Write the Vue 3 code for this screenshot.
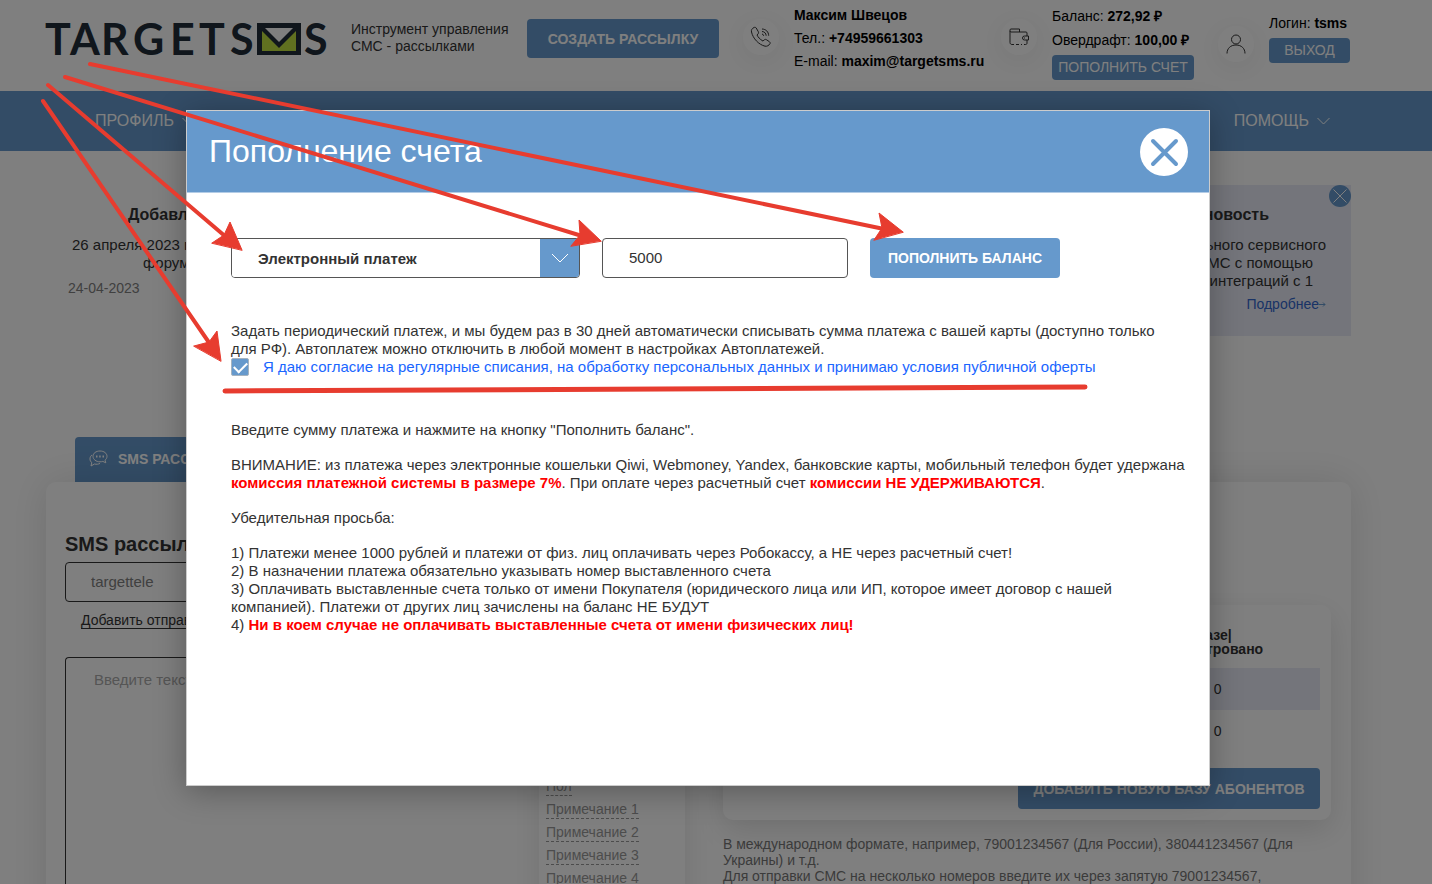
<script setup>
import { ref } from 'vue'

const method = ref('Электронный платеж')
const methods = ['Электронный платеж', 'Расчетный счет']
const amount = ref('5000')
const agree = ref(true)
const sender = ref('targettele')
const message = ref('')

const fields = ['Пол', 'Примечание 1', 'Примечание 2', 'Примечание 3', 'Примечание 4']
const bases = ref([
  { id: 1, count: '0 | 0' },
  { id: 2, count: '0 | 0' },
])
</script>

<template>
  <div class="page">
    <header class="header">
      <a href="#" class="logo" aria-label="TARGETSMS">
        <svg width="281" height="60" viewBox="0 0 281 60">
          <g class="logoText">
            <text x="-1" y="46">T</text>
            <text x="24" y="46">A</text>
            <text x="55" y="46">R</text>
            <text x="87" y="46">G</text>
            <text x="124" y="46">E</text>
            <text x="153" y="46">T</text>
            <text x="184" y="46">S</text>
            <text x="258" y="46">S</text>
          </g>
          <rect x="211" y="14" width="44" height="32" fill="#212c38" />
          <path d="M219 19h28l-14 14z" fill="#fff" />
          <path d="M216 22l17 17 17-17v20h-34z" fill="#c0e040" />
        </svg>
      </a>
      <p class="tagline">Инструмент управления<br>СМС - рассылками</p>
      <button class="createButton">СОЗДАТЬ РАССЫЛКУ</button>
      <div class="infoBlock">
        <span class="circle">
          <svg width="22" height="22" viewBox="0 0 22 22" class="lineIcon">
            <path d="M4 1.500C2 2.500 1 4 1.500 6c1.500 6.500 7 12.500 13.500 14.200 2 .4 4-.8 5-2.500.4-.8 0-1.500-.6-2l-3-2c-.8-.5-1.500-.4-2.200.2l-1.200 1.200C9.500 13 8 11 7 9l1.200-1.300c.5-.6.5-1.300.1-2L6.200 2C5.600 1.200 4.800 1.100 4 1.500z" />
            <path d="M12 8c1 .2 1.500.8 1.700 1.800M12 5.500c2.500.2 4 1.700 4.200 4.200M12 3c4 .2 6.500 2.700 6.700 6.700" />
          </svg>
        </span>
        <div class="contacts">
          <p><b>Максим Швецов</b></p>
          <p>Тел.: <b>+74959661303</b></p>
          <p>E-mail: <b>maxim@targetsms.ru</b></p>
        </div>
      </div>
      <div class="infoBlock">
        <span class="circle">
          <svg width="20" height="18" viewBox="0 0 20 18" class="lineIcon">
            <path d="M1 3v11.500c0 1.200.8 2 2 2h2M7 16.500h3M12 16.500h1M15 16.500h1.500c1 0 1.500-.5 1.500-1.500v-3M18 8V5c0-.7-.4-1-1-1H2C1.400 4 1 3.600 1 3V2c0-.6.4-1 1-1h8.500v3" />
            <path d="M19.500 8h-4a2 2 0 0 0 0 4h4zM15.500 9.500v1" />
          </svg>
        </span>
        <div class="balance">
          <p>Баланс: <b>272,92 ₽</b></p>
          <p>Овердрафт: <b>100,00 ₽</b></p>
          <button class="smallButton">ПОПОЛНИТЬ СЧЕТ</button>
        </div>
      </div>
      <div class="infoBlock login">
        <span class="circle">
          <svg width="20" height="20" viewBox="0 0 20 20" class="lineIcon">
            <circle cx="10" cy="5.500" r="4.500" />
            <path d="M1 19.500c0-5 3.500-8.500 9-8.500s9 3.500 9 8.500" />
          </svg>
        </span>
        <div class="balance">
          <p>Логин: <b>tsms</b></p>
          <button class="smallButton">ВЫХОД</button>
        </div>
      </div>
    </header>

    <nav class="nav">
      <a href="#">ПРОФИЛЬ
        <svg width="13" height="8" viewBox="0 0 13 8"><path d="M.5 1l6 6 6-6" /></svg>
      </a>
      <a href="#">ПОМОЩЬ
        <svg width="13" height="8" viewBox="0 0 13 8"><path d="M.5 1l6 6 6-6" /></svg>
      </a>
    </nav>

    <section class="news">
      <article class="newsLeft">
        <h3>Добавлена новость</h3>
        <p class="first">26 апреля 2023 г. состоится</p>
        <p class="second">форум</p>
        <time>24-04-2023</time>
      </article>
      <article class="newsRight">
        <button class="newsClose" aria-label="Закрыть">
          <svg width="22" height="22" viewBox="0 0 22 22"><path d="M4.500 4.500l13 13M17.500 4.500l-13 13" /></svg>
        </button>
        <h3>Важная новость</h3>
        <p class="wide">Запуск дополнительного сервисного</p>
        <p>СМС с помощью</p>
        <p>API/интеграций с 1</p>
        <a href="#">Подробнее<svg width="7" height="7" viewBox="0 0 7 7"><path d="M0 3.500h6M4 1.500l2 2-2 2" /></svg></a>
      </article>
    </section>

    <main class="sending">
      <button class="tab">
        <svg width="19" height="17" viewBox="0 0 19 17">
          <path d="M11 1c4 0 7 2.300 7 5.300 0 1.600-.7 2.900-2 3.900l.8 2.600-3-1.400c-.9.300-1.800.400-2.800.400-4 0-7-2.400-7-5.500S7 1 11 1z" />
          <path d="M3 5C1.500 6 1 7.400 1 9c0 1.500.6 2.700 1.800 3.600L2 16l3.500-2c2 .5 4 .2 5.500-.6" />
          <path d="M7 6.500h1.500M10.200 6.500h1.500M13.500 6.500H15" class="dots" />
        </svg>
        SMS РАССЫЛКА
      </button>
      <div class="panel">
        <div class="composer">
          <h2>SMS рассылка</h2>
          <input v-model="sender" class="sender" aria-label="Отправитель">
          <a href="#" class="addSender">Добавить отправителя</a>
          <div class="messageBox">
            <textarea v-model="message" placeholder="Введите текст сообщения" aria-label="Текст сообщения"></textarea>
            <div class="fields">
              <a v-for="field in fields" :key="field" href="#">{{ field }}</a>
            </div>
          </div>
        </div>
        <div class="right">
          <div class="basesCard">
            <table class="bases">
              <thead>
                <tr>
                  <th></th>
                  <th>в базе|<br>зарегистровано</th>
                </tr>
              </thead>
              <tbody>
                <tr v-for="base in bases" :key="base.id">
                  <td></td>
                  <td>{{ base.count }}</td>
                </tr>
              </tbody>
            </table>
            <button class="addBase">ДОБАВИТЬ НОВУЮ БАЗУ АБОНЕНТОВ</button>
          </div>
          <p class="hint">
            В международном формате, например, 79001234567 (Для России), 380441234567 (Для<br>Украины) и т.д.<br>
            Для отправки СМС на несколько номеров введите их через запятую 79001234567,
          </p>
        </div>
      </div>
    </main>

    <div class="overlay">
      <div class="modal" role="dialog" aria-labelledby="modalTitle">
        <div class="modalHeader">
          <h1 id="modalTitle">Пополнение счета</h1>
          <button class="closeButton" aria-label="Закрыть">
            <svg width="48" height="48" viewBox="0 0 48 48"><path d="M13 13l23 23M36 13l-23 23" /></svg>
          </button>
        </div>
        <div class="modalBody">
          <form class="payForm" @submit.prevent>
            <div class="selectBox">
              <select v-model="method" aria-label="Способ оплаты">
                <option v-for="m in methods" :key="m">{{ m }}</option>
              </select>
              <span class="selectArrow">
                <svg width="18" height="10" viewBox="0 0 18 10"><path d="M1 1l8 8 8-8" /></svg>
              </span>
            </div>
            <input v-model="amount" class="amount" aria-label="Сумма платежа">
            <button class="payButton">ПОПОЛНИТЬ БАЛАНС</button>
          </form>
          <p>Задать периодический платеж, и мы будем раз в 30 дней автоматически списывать сумма платежа с вашей карты (доступно только<br>для РФ). Автоплатеж можно отключить в любой момент в настройках Автоплатежей.</p>
          <div class="agree">
            <input id="agree" v-model="agree" type="checkbox">
            <label for="agree">Я даю согласие на регулярные списания, на обработку персональных данных и принимаю условия публичной оферты</label>
          </div>
          <div class="rules">
            <p>Введите сумму платежа и нажмите на кнопку "Пополнить баланс".</p>
            <p>ВНИМАНИЕ: из платежа через электронные кошельки Qiwi, Webmoney, Yandex, банковские карты, мобильный телефон будет удержана<br><b>комиссия платежной системы в размере 7%</b>. При оплате через расчетный счет <b>комиссии НЕ УДЕРЖИВАЮТСЯ</b>.</p>
            <p>Убедительная просьба:</p>
            <p>
              1) Платежи менее 1000 рублей и платежи от физ. лиц оплачивать через Робокассу, а НЕ через расчетный счет!<br>
              2) В назначении платежа обязательно указывать номер выставленного счета<br>
              3) Оплачивать выставленные счета только от имени Покупателя (юридического лица или ИП, которое имеет договор с нашей<br>компанией). Платежи от других лиц зачислены на баланс НЕ БУДУТ<br>
              4) <b>Ни в коем случае не оплачивать выставленные счета от имени физических лиц!</b>
            </p>
          </div>
        </div>
      </div>
    </div>

    <!-- step pointers over the dialog -->
    <svg class="pointers">
      <path d="M90 64L884 229M65 77L582 236M48 85L226 237M43 101L210 344" />
      <path d="M225 391L1085 387" class="underline" />
      <polygon points="903,232 879,213 882,228 874,240" />
      <polygon points="601,241 579,220 580,235 571,246" />
      <polygon points="242,250 230,222 224,235 212,243" />
      <polygon points="221,361 217,331 209,342 194,346" />
    </svg>
  </div>
</template>

<style>
  body {
    margin: 0;
    background-color: #fff;
  }
</style>

<style scoped>
  .page {
    position: relative;
    height: 100vh;
    overflow: hidden;
    font-family: "Liberation Sans", Arial, sans-serif;
    font-size: 15px;
    line-height: 18px;
    color: #333;
  }
  .page * {
    box-sizing: border-box;
  }
  p, h1, h2, h3 {
    margin: 0;
  }
  a {
    color: inherit;
    text-decoration: none;
  }
  button, input, select, textarea {
    font-family: inherit;
    font-size: 15px;
    color: #333;
    margin: 0;
  }
  button {
    border: none;
    border-radius: 4px;
    background-color: #6699cc;
    color: #fff;
    padding: 0;
    cursor: pointer;
    white-space: nowrap;
  }
  svg {
    display: block;
    fill: none;
  }

  .header {
    display: flex;
    align-items: flex-start;
    gap: 24px;
    height: 91px;
    padding: 0 82px 0 46px;
    white-space: nowrap;
  }
  .logo {
    margin-top: 9px;
  }
  .logo svg {
    overflow: visible;
  }
  .logoText {
    font-family: Lato, sans-serif;
    font-size: 43px;
    font-weight: bold;
    fill: #212c38;
  }
  .tagline {
    width: 152px;
    padding-top: 21px;
    font-size: 14px;
    line-height: 17px;
  }
  .createButton {
    width: 192px;
    height: 39px;
    margin-top: 19px;
    font-size: 14px;
    font-weight: bold;
  }
  .infoBlock {
    display: flex;
    gap: 15px;
    font-size: 14px;
    color: #000;
  }
  .circle {
    display: flex;
    align-items: center;
    justify-content: center;
    width: 36px;
    height: 36px;
    margin-top: 19px;
    border-radius: 50%;
    box-shadow: 0 5px 30px rgba(0, 0, 0, 0.08);
  }
  .lineIcon {
    stroke: #333;
  }
  .contacts {
    width: 183px;
    padding-top: 4px;
    line-height: 23px;
  }
  .balance {
    padding-top: 4px;
    line-height: 24px;
  }
  .smallButton {
    display: block;
    width: 142px;
    height: 25px;
    margin-top: 3px;
    padding-bottom: 2px;
    font-size: 14px;
  }
  .login .circle {
    margin-top: 26px;
  }
  .login .balance {
    padding-top: 11px;
  }
  .login .smallButton {
    width: 81px;
  }

  .nav {
    display: flex;
    align-items: center;
    justify-content: space-between;
    height: 60px;
    padding: 0 102px 0 95px;
    background-color: #6699cc;
    color: #fff;
    font-size: 16px;
  }
  .nav a {
    display: flex;
    align-items: center;
    gap: 8px;
  }
  .nav svg, .newsClose svg, .tab svg, .selectArrow svg {
    stroke: #fff;
  }

  .news {
    display: flex;
    justify-content: space-between;
    padding: 34px 81px 101px 68px;
    white-space: nowrap;
  }
  .news h3 {
    font-size: 16px;
    line-height: 20px;
    margin-bottom: 11px;
  }
  .newsLeft {
    padding-top: 20px;
  }
  .newsLeft h3 {
    padding-left: 60px;
  }
  .newsLeft .first {
    padding-left: 4px;
  }
  .newsLeft .second {
    padding-left: 75px;
  }
  .newsLeft time {
    display: block;
    margin-top: 7px;
    font-size: 14px;
    color: #808080;
  }
  .newsRight {
    position: relative;
    width: 320px;
    height: 151px;
    padding: 20px 25px 0 0;
    background-color: #e8ebf7;
    text-align: right;
  }
  .newsRight h3 {
    padding-right: 57px;
  }
  .newsRight p {
    padding-right: 13px;
  }
  .newsRight p.wide {
    padding-right: 0;
  }
  .newsRight a {
    display: flex;
    align-items: center;
    justify-content: flex-end;
    margin-top: 5px;
    font-size: 14px;
    color: #3366cc;
  }
  .newsRight a svg {
    stroke: #6699cc;
  }
  .newsClose {
    position: absolute;
    top: 0;
    right: 0;
    border-radius: 50%;
  }

  .tab {
    display: flex;
    align-items: center;
    gap: 10px;
    height: 45px;
    margin-left: 75px;
    padding: 0 14px 2px;
    border-radius: 4px 4px 0 0;
    font-size: 14px;
    font-weight: bold;
  }
  .tab .dots {
    stroke-width: 2;
  }
  .panel {
    display: grid;
    grid-template-columns: 620fr 608fr;
    gap: 38px;
    margin: 0 81px 0 46px;
    padding: 50px 20px 40px 19px;
    border-radius: 10px;
    box-shadow: 0 0 40px rgba(0, 0, 0, 0.12);
  }
  .composer h2 {
    font-size: 20px;
    line-height: 24px;
  }
  .sender {
    display: block;
    width: 100%;
    height: 40px;
    margin-top: 6px;
    padding: 0 25px 2px;
    border: 1px solid #333;
    border-radius: 4px;
    color: #808080;
  }
  .addSender {
    display: inline-block;
    margin: 10px 0 0 16px;
    line-height: 16px;
    font-size: 14px;
    border-bottom: 1px solid #333;
  }
  .messageBox {
    display: flex;
    height: 300px;
    margin-top: 28px;
    border: 1px solid #333;
    border-right: none;
    border-radius: 4px 0 0 4px;
  }
  .messageBox textarea {
    flex: 1;
    padding: 13px 28px;
    border: none;
    background-color: transparent;
    resize: none;
  }
  .messageBox textarea::placeholder {
    color: #aaa;
  }
  .fields {
    display: flex;
    flex-direction: column;
    align-items: flex-start;
    gap: 5px;
    width: 146px;
    padding: 120px 7px 0;
    box-shadow: 0 0 30px rgba(0, 0, 0, 0.1);
    font-size: 14px;
    color: #999;
  }
  .fields a {
    line-height: 17px;
    border-bottom: 1px dashed #999;
  }
  .basesCard {
    display: flex;
    flex-direction: column;
    align-items: flex-end;
    height: 215px;
    margin-top: 73px;
    padding: 0 11px;
    border-radius: 10px;
    box-shadow: 0 10px 30px rgba(0, 0, 0, 0.12);
  }
  .bases {
    width: 100%;
    border-collapse: collapse;
    table-layout: fixed;
    font-size: 14px;
    text-align: center;
  }
  .bases th {
    height: 63px;
    padding: 10px 0 0;
    line-height: 14px;
  }
  .bases th:last-child {
    width: 224px;
  }
  .bases td {
    height: 42px;
    padding: 0;
  }
  .bases tbody tr:first-child {
    background-color: #e8ebf7;
  }
  .addBase {
    width: 302px;
    height: 41px;
    margin-top: 16px;
    font-size: 14px;
    font-weight: bold;
  }
  .hint {
    margin-top: 16px;
    font-size: 14px;
    line-height: 16px;
    color: #777;
    white-space: nowrap;
  }

  .overlay {
    position: absolute;
    inset: 0;
    padding: 110px 222px 0 186px;
    background-color: rgba(0, 0, 0, 0.5);
  }
  .modal {
    min-height: 676px;
    border: 1px solid rgba(0, 0, 0, 0.2);
    background-color: #fff;
    box-shadow: 0 5px 30px rgba(0, 0, 0, 0.3);
  }
  .modalHeader {
    display: flex;
    align-items: center;
    justify-content: space-between;
    height: 82px;
    padding: 0 21px 0 22px;
    border-bottom: 1px solid #b3cce6;
    background-color: #6699cc;
  }
  .modalHeader h1 {
    padding-bottom: 2px;
    font-size: 32px;
    line-height: 36px;
    font-weight: normal;
    color: #fff;
  }
  .closeButton {
    border-radius: 50%;
    background-color: #fff;
  }
  .closeButton svg {
    stroke: #6699cc;
    stroke-width: 4;
    stroke-linecap: round;
  }
  .modalBody {
    padding: 45px 44px 0;
    white-space: nowrap;
  }
  .payForm {
    display: flex;
    gap: 22px;
    margin-bottom: 44px;
  }
  .selectBox {
    display: flex;
    width: 349px;
    height: 40px;
    border: 1px solid #555;
    border-radius: 4px;
    overflow: hidden;
  }
  .selectBox select {
    flex: 1;
    padding: 0 26px;
    border: none;
    background-color: #fff;
    appearance: none;
    font-size: 15px;
    font-weight: bold;
  }
  .selectArrow {
    display: flex;
    align-items: center;
    justify-content: center;
    width: 39px;
    background-color: #6699cc;
  }
  .amount {
    width: 246px;
    height: 40px;
    padding: 0 26px 2px;
    border: 1px solid #555;
    border-radius: 4px;
  }
  .payButton {
    width: 190px;
    height: 40px;
    font-size: 14px;
    font-weight: bold;
  }
  .agree {
    display: flex;
    align-items: center;
    gap: 14px;
    color: #1a66ff;
  }
  .agree input {
    display: grid;
    place-items: center;
    width: 18px;
    height: 18px;
    border: 1px solid #a6b3bf;
    border-radius: 2px;
    appearance: none;
  }
  .agree input:checked {
    background-color: #6699cc;
  }
  .agree input:checked::before {
    content: "";
    width: 11px;
    height: 6px;
    margin-bottom: 3px;
    border-left: 2px solid #fff;
    border-bottom: 2px solid #fff;
    transform: rotate(-45deg);
  }
  .rules {
    display: flex;
    flex-direction: column;
    gap: 17px;
    margin-top: 45px;
  }
  .rules b {
    color: #f00;
  }

  .pointers {
    position: absolute;
    top: 0;
    left: 0;
    width: 100%;
    height: 100%;
    pointer-events: none;
    stroke: #e73c2f;
    stroke-width: 4;
    stroke-linecap: round;
  }
  .pointers .underline {
    stroke-width: 5;
  }
  .pointers polygon {
    fill: #e73c2f;
    stroke-width: 1;
  }
</style>
